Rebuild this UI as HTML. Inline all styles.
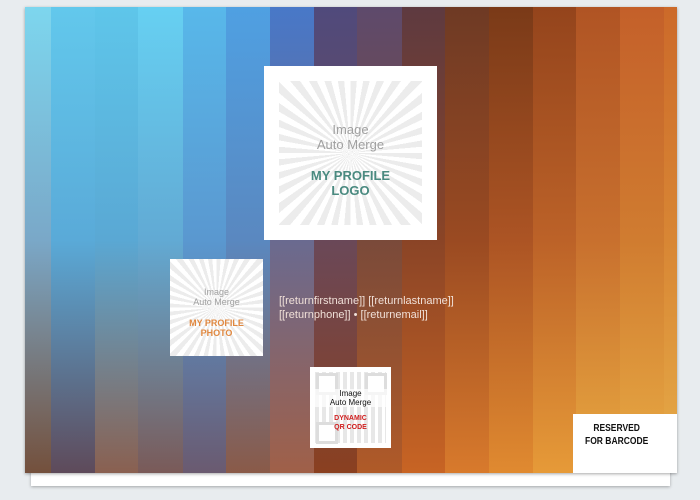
<!DOCTYPE html>
<html><head><style>
body{margin:0;width:700px;height:500px;background:#e8ecef;position:relative;overflow:hidden;font-family:"Liberation Sans",sans-serif}
.sheet2{position:absolute;left:31px;top:20px;width:639px;height:466px;background:#fff;box-shadow:0 1px 3px rgba(0,0,0,.3)}
.card{position:absolute;left:25px;top:7px;width:652px;height:466px;overflow:hidden;box-shadow:0 1px 3px rgba(0,0,0,.35);display:flex}
.s{height:100%;flex:none}
.box{position:absolute;background:#fff}
.burst{position:absolute;background:repeating-conic-gradient(from 0deg,#ececec 0 5deg,#fff 5deg 10deg)}
.t{position:absolute;left:0;right:0;text-align:center;font-weight:bold}
.n{font-weight:normal}
</style></head><body>
<div class="sheet2"></div>
<div class="card">
<div class="s" style="width:26px;background:linear-gradient(#7dd6ee,#7aa8c8 50%,#74503c)"></div>
<div class="s" style="width:44px;background:linear-gradient(#62c8ec,#5aaad8 50%,#5e4a5a)"></div>
<div class="s" style="width:43px;background:linear-gradient(#5ec6ea,#5aa8d4 50%,#8a6050)"></div>
<div class="s" style="width:45px;background:linear-gradient(#66d0f2,#62aad4 50%,#7a5a58)"></div>
<div class="s" style="width:43px;background:linear-gradient(#58b8ea,#5a98d0 50%,#6a5a70)"></div>
<div class="s" style="width:44px;background:linear-gradient(#4fa0e2,#5a88c0 50%,#8a5a48)"></div>
<div class="s" style="width:44px;background:linear-gradient(#4878c8,#6a6a90 50%,#a06048)"></div>
<div class="s" style="width:43px;background:linear-gradient(#504a7c,#6a4858 50%,#8a4020)"></div>
<div class="s" style="width:45px;background:linear-gradient(#5e4a6c,#7a4a3a 50%,#b05a28)"></div>
<div class="s" style="width:43px;background:linear-gradient(#5e3a40,#8a4426 50%,#c86424)"></div>
<div class="s" style="width:44px;background:linear-gradient(#6e3a24,#9a4a22 50%,#d87a2c)"></div>
<div class="s" style="width:44px;background:linear-gradient(#7a3a18,#ac5424 50%,#e08a30)"></div>
<div class="s" style="width:43px;background:linear-gradient(#94441c,#bc6228 50%,#e69a38)"></div>
<div class="s" style="width:44px;background:linear-gradient(#b05424,#c8702e 50%,#e8a840)"></div>
<div class="s" style="width:44px;background:linear-gradient(#c4602a,#d07c30 50%,#e8aa44)"></div>
<div class="s" style="width:20px;background:linear-gradient(#cc6a2a,#d88634 50%,#e6ac48)"></div>
</div>

<div class="box" style="left:264px;top:66px;width:173px;height:174px">
<div class="burst" style="left:15px;top:15px;width:143px;height:144px"></div>
<div class="t n" style="top:56px;font-size:13px;line-height:15px;color:#a0a0a0">Image<br>Auto Merge</div>
<div class="t" style="top:102px;font-size:13px;line-height:15px;color:#4a8a80">MY PROFILE<br>LOGO</div>
</div>

<div class="box" style="left:170px;top:259px;width:93px;height:97px">
<div class="burst" style="left:0;top:0;width:93px;height:97px"></div>
<div class="t n" style="top:28px;font-size:9px;line-height:10px;color:#a0a0a0">Image<br>Auto Merge</div>
<div class="t" style="top:59px;font-size:9px;line-height:10px;color:#e08840">MY PROFILE<br>PHOTO</div>
</div>

<div style="position:absolute;left:279px;top:294px;font-size:11px;line-height:14px;color:#f0e0d8">[[returnfirstname]] [[returnlastname]]<br>[[returnphone]] • [[returnemail]]</div>

<div class="box" style="left:310px;top:367px;width:81px;height:81px">
<div style="position:absolute;left:5px;top:5px;width:71px;height:71px;background:repeating-linear-gradient(90deg,#e2e2e2 0 4px,#fff 4px 7px),#eee;opacity:.8"></div>
<div style="position:absolute;left:6px;top:6px;width:16px;height:16px;border:3px solid #ddd;background:#fff"></div>
<div style="position:absolute;left:55px;top:6px;width:16px;height:16px;border:3px solid #ddd;background:#fff"></div>
<div style="position:absolute;left:6px;top:55px;width:16px;height:16px;border:3px solid #ddd;background:#fff"></div>
<div class="t n" style="top:22px;font-size:8px;line-height:9px;color:#111;background:rgba(255,255,255,.7)">Image<br>Auto Merge</div>
<div class="t" style="top:47px;font-size:7px;line-height:9px;color:#d02020">DYNAMIC<br>QR CODE</div>
</div>

<div class="box" style="left:573px;top:414px;width:104px;height:59px">
<div style="position:absolute;left:12px;top:8px;font-size:10px;line-height:13px;font-weight:bold;color:#111;text-align:center;transform:scaleX(.85);transform-origin:left">RESERVED<br>FOR BARCODE</div>
</div>
</body></html>
